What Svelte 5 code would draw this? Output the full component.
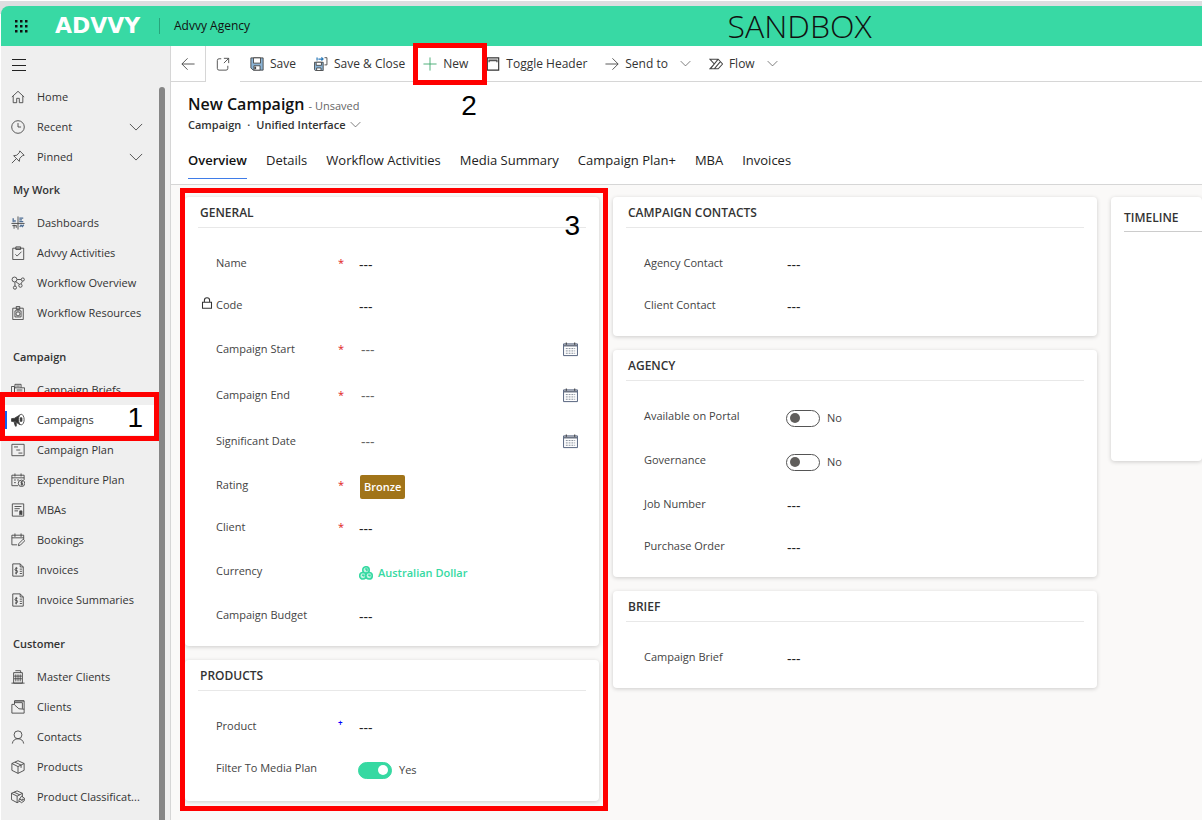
<script>
  const navGroups = [
    {
      title: '',
      items: [
        { label: 'Home', icon: 'home' },
        { label: 'Recent', icon: 'clock', expand: true },
        { label: 'Pinned', icon: 'pin', expand: true }
      ]
    },
    {
      title: 'My Work',
      items: [
        { label: 'Dashboards', icon: 'dashboard' },
        { label: 'Advvy Activities', icon: 'clipboard' },
        { label: 'Workflow Overview', icon: 'nodes' },
        { label: 'Workflow Resources', icon: 'badge' }
      ]
    },
    {
      title: 'Campaign',
      items: [
        { label: 'Campaign Briefs', icon: 'brief' },
        { label: 'Campaigns', icon: 'megaphone', current: true },
        { label: 'Campaign Plan', icon: 'plan' },
        { label: 'Expenditure Plan', icon: 'expenditure' },
        { label: 'MBAs', icon: 'mba' },
        { label: 'Bookings', icon: 'booking' },
        { label: 'Invoices', icon: 'invoice' },
        { label: 'Invoice Summaries', icon: 'invoice' }
      ]
    },
    {
      title: 'Customer',
      items: [
        { label: 'Master Clients', icon: 'building' },
        { label: 'Clients', icon: 'client' },
        { label: 'Contacts', icon: 'person' },
        { label: 'Products', icon: 'cube' },
        { label: 'Product Classificat...', icon: 'cubes' }
      ]
    }
  ];

  const commands = [
    { label: 'Save', icon: 'save' },
    { label: 'Save & Close', icon: 'saveclose' },
    { label: 'New', icon: 'plus', step: 2 },
    { label: 'Toggle Header', icon: 'header' },
    { label: 'Send to', icon: 'arrow', menu: true },
    { label: 'Flow', icon: 'flow', menu: true }
  ];

  const tabs = ['Overview', 'Details', 'Workflow Activities', 'Media Summary', 'Campaign Plan+', 'MBA', 'Invoices'];
  let activeTab = $state('Overview');

  const general = {
    title: 'GENERAL',
    fields: [
      { label: 'Name', kind: 'text', required: true },
      { label: 'Code', kind: 'text', locked: true },
      { label: 'Campaign Start', kind: 'date', required: true },
      { label: 'Campaign End', kind: 'date', required: true },
      { label: 'Significant Date', kind: 'date' },
      { label: 'Rating', kind: 'rating', required: true },
      { label: 'Client', kind: 'text', required: true },
      { label: 'Currency', kind: 'lookup' },
      { label: 'Campaign Budget', kind: 'text' }
    ]
  };
  const products = {
    title: 'PRODUCTS',
    fields: [
      { label: 'Product', kind: 'text', recommended: true },
      { label: 'Filter To Media Plan', kind: 'toggle', on: true }
    ]
  };
  const middle = [
    {
      title: 'CAMPAIGN CONTACTS',
      fields: [
        { label: 'Agency Contact', kind: 'text' },
        { label: 'Client Contact', kind: 'text' }
      ]
    },
    {
      title: 'AGENCY',
      fields: [
        { label: 'Available on Portal', kind: 'toggle', on: false },
        { label: 'Governance', kind: 'toggle', on: false },
        { label: 'Job Number', kind: 'text' },
        { label: 'Purchase Order', kind: 'text' }
      ]
    },
    { title: 'BRIEF', fields: [{ label: 'Campaign Brief', kind: 'text' }] }
  ];

  const idOf = (label) => label.toLowerCase().replace(/[^a-z]+/g, '-');
</script>

{#snippet icon(name)}
  <svg class="icon" viewBox="0 0 16 16" aria-hidden="true">
    {#if name === 'home'}
      <path d="M1 8 8 1.500 15 8M2.500 7v7.500h4V9.500h3v5h4V7" />
    {:else if name === 'clock'}
      <circle cx="8" cy="8" r="7.200" /><path d="M8 3.500V8h3.500" />
    {:else if name === 'pin'}
      <path d="m10 1 5 5-2 .500-3 3-.500 3.500L3 6.500 6.500 6l3-3zM6 10l-5 5" />
    {:else if name === 'dashboard'}
      <path stroke="#4d6d94" stroke-width="1.500" d="M2.500 7V2.500M4.500 7V4.500M9.500 2.500H14M9.500 4.500h3M9.500 6.500H14M10 12.500l1.500-2 1.500 1.500 1.500-2" />
      <path d="M.500 8.500h15M8 .500v15M1.500 11H6M3.500 10v4.500M6 10.500v3" />
    {:else if name === 'clipboard'}
      <path d="M2 2.500h12.500v13H2zM5.500 1h5.500v3H5.500zM5 9.500l2 2 5-5" />
    {:else if name === 'nodes'}
      <circle cx="4" cy="4" r="2.800" /><circle cx="13.500" cy="4" r="1.800" /><circle cx="4.500" cy="13.300" r="1.800" /><circle cx="10.800" cy="11" r="1.900" />
      <path d="M7 4h4.500M5.500 6.500 9.500 9.500M4.500 7v4.500M13 6l-1.500 3" />
    {:else if name === 'badge'}
      <path d="M2 2.500h12v13H2zM6 .500h4V4H6zM4.500 5.500h7v7h-7z" /><circle cx="8" cy="9" r="2.300" />
    {:else if name === 'brief'}
      <path d="M4.500 5.500v-4h7v4M.500 4h3.500v9H.500zM4 5.500h11.500v7.500H4zM6 3.500h4M6.500 8H13M6.500 10.500H13" />
    {:else if name === 'megaphone'}
      <path fill="#333" d="M.500 6.500 4 6l6.500-4v11.500L5 10l-4.500-.500zM3.500 10.500l2.500.500v4H5z" />
      <ellipse cx="11.800" cy="7.500" rx="3.200" ry="6" fill="#fff" /><path fill="#333" d="M10.500 5.500H12.500v4h-2z" />
    {:else if name === 'plan'}
      <path d="M1 1.500h14v13H1zM3.500 4.500H8M6 8h4.500M8.500 11.500H13" />
    {:else if name === 'expenditure'}
      <path d="M8 14.500H1V2.500h14V8M1 5.500h14M4.500.500v3.500M11.500.500v3.500M3.500 8h2M7 8h2M3.500 11h2" />
      <circle cx="12" cy="11.800" r="3.700" /><path d="M13.500 10h-2v1.800h1.800v1.700H11M12.300 9.300v5" />
    {:else if name === 'mba'}
      <path d="M1.500 1h13v14h-13zM4 4h8M4 6.500h6M4 9h4" /><path fill="#444" d="M10 9h2.500v4.500l-1.200-1-1.300 1z" />
    {:else if name === 'booking'}
      <path d="M7 13.500H1V2.500h13.500V7M1 5.500h13.500M4.500.500v4M11.500.500v4M8.500 14.500l.500-2.500 5-5 1.800 1.800-5 5z" />
    {:else if name === 'invoice'}
      <path d="M2 1h8.500L14 4.500V15H2zM10.500 1v3.500H14M10 7h2.500M10 9.500h2.500M10 12h2.500" />
      <path d="M7.500 6H5.500L4.500 7l.500 1.500h2L7.500 10l-1 1.500h-2M6 4.500V13" />
    {:else if name === 'building'}
      <path d="M3 3h10v12H3zM5 .800h6V3M.500 15h15M5.500 5v8M8 5v8M10.500 5v8M3.500 7h9M3.500 10h9" />
    {:else if name === 'client'}
      <path d="M1 15V5h3V1h11v14zM4 1h11M4 5.500 9 10l6 .500M4 3h9v7" />
    {:else if name === 'person'}
      <circle cx="8" cy="5.500" r="4.500" /><path d="M1.500 15.500c.500-3.500 3-5.500 6.500-5.500s6 2 6.500 5.500" />
    {:else if name === 'cube'}
      <path d="m8 .800 7 3.200v7.800l-7 3.500-7-3.500V4zM1 4l7 3.500L15 4M8 7.500v7.800M4.500 2.500l7 3.300V9" />
    {:else if name === 'cubes'}
      <path d="m7 1 6 2.800V11l-6 3.500L.500 11V3.800zM.500 3.800 7 7l6-3.200M7 7v7.500M3.500 2.500 10 5.500" />
      <path fill="#efefef" d="m12 7 3.500 2.500-.500 3-3 2-3.200-2.500zM9.500 10l3 2 2.500-2" />
    {:else if name === 'save'}
      <path fill="#8bb4d6" stroke="#444" d="M1 1h14v14H3.500L1 12.500z" />
      <path fill="#fff" stroke="#444" d="M4 1h8v6H4zM4.500 10h7v5h-7z" /><path stroke="#444" stroke-width="2" d="M6 11v3" />
    {:else if name === 'saveclose'}
      <path fill="#8bb4d6" stroke="#444" d="M.500 6h10v9.500h-9l-1-1z" /><path fill="#fff" stroke="#444" d="M2.500 6h6v3.500h-6zM3 12.500h5v3H3z" />
      <path stroke="#2878b8" stroke-width="1.400" d="M3.500 .500v3.500M5 2.300h5M8.500.500 10.300 2.300 8.500 4" /><path stroke="#444" d="M12 .800h2.800v8.200H12" />
    {:else if name === 'plus'}
      <path stroke="#3aa66a" d="M8 .500v15M.500 8h15" />
    {:else if name === 'header'}
      <path stroke="#333" stroke-width="1.300" d="M1.500 1h13v14h-13z" /><path stroke="#555" stroke-width="1.500" d="M3 3.500h10M3.500 6v-2h9v2" />
    {:else if name === 'arrow'}
      <path d="M.500 8h14.500M8.500 1.500 15 8l-6.500 6.500" />
    {:else if name === 'back'}
      <path d="M15.500 8H1M7.500 1.500 1 8l6.500 6.500" />
    {:else if name === 'popout'}
      <path d="M6 2H3.500Q1.500 2 1.500 4v9q0 2 2 2h8q2 0 2-2v-3M9 1.500h5.500V7M14.500 1.500 9 7" />
    {:else if name === 'flow'}
      <path stroke-width="1.200" d="M1 2.500h9.500L15.500 8l-5 5.500H1L6 8zM10.500 2.500l-9 11M13 5.200 6 13.500" />
    {:else if name === 'chevron'}
      <path d="m1 4.500 7 7 7-7" />
    {:else if name === 'lock'}
      <path stroke="#333" stroke-width="1.400" d="M2 7h12v8H2zM4.500 7V4.500Q4.500 1 8 1t3.500 3.500V7" />
    {:else if name === 'calendar'}
      <path fill="#fff" stroke="#4d5c78" d="M.600 2h14.800v12.500H.600z" /><path stroke="#6d7585" stroke-width="2" d="M1 3.800h14" />
      <path stroke="#333" d="M3.500.500V3M12.500.500V3" /><path stroke="#7f8794" stroke-dasharray="2 1" d="M3 7h10M3 9.500h10M3 12h10" />
    {:else if name === 'coins'}
      <g fill="#c2f3e2" stroke="#36d9a2" stroke-width="1.800"><circle cx="8" cy="4.500" r="3.700" /><circle cx="4.500" cy="11.200" r="3.700" /><circle cx="11.500" cy="11.200" r="3.700" /><path d="M7 3.500h2v2.500M3.500 10.500h2V12M10.500 10.500h2V12" /></g>
    {/if}
  </svg>
{/snippet}

{#snippet card(section)}
  <section class="card">
    <h2>{section.title}</h2>
    <div class="fields">
      {#each section.fields as f}
        <div class="field {f.kind}">
          {#if f.locked}<span class="lock">{@render icon('lock')}</span>{/if}
          <label for={idOf(f.label)}>{f.label}</label>
          <span class="mark" class:blue={f.recommended}>{f.required ? '*' : f.recommended ? '+' : ''}</span>
          <div class="value">
            {#if f.kind === 'text'}
              <input type="text" id={idOf(f.label)} placeholder="---" readonly={f.locked} />
            {:else if f.kind === 'date'}
              <input type="text" id={idOf(f.label)} placeholder="---" />
              <button class="pick" aria-label="Choose date">{@render icon('calendar')}</button>
            {:else if f.kind === 'rating'}
              <button class="pill" id={idOf(f.label)}>Bronze</button>
            {:else if f.kind === 'lookup'}
              <a class="link" id={idOf(f.label)} href="#currency">{@render icon('coins')}Australian Dollar</a>
            {:else}
              <input type="checkbox" role="switch" id={idOf(f.label)} bind:checked={f.on} />
              <span>{f.on ? 'Yes' : 'No'}</span>
            {/if}
          </div>
        </div>
      {/each}
    </div>
  </section>
{/snippet}

<div class="page">
  <div class="strip"></div>
  <header class="top">
    <button class="waffle" aria-label="App launcher">
      <svg viewBox="0 0 14 14" aria-hidden="true">
        {#each [1, 6, 11] as y}{#each [1, 6, 11] as x}<rect {x} {y} width="2.500" height="2.500" />{/each}{/each}
      </svg>
    </button>
    <span class="logo">ADVVY</span>
    <span class="app">Advvy Agency</span>
    <span class="env">SANDBOX</span>
  </header>

  <div class="body">
    <aside>
      <button class="burger" aria-label="Collapse menu"><span></span><span></span><span></span></button>
      <div class="navwrap">
        <nav>
          {#each navGroups as group}
            <div class="group">
              {#if group.title}<h3>{group.title}</h3>{/if}
              {#each group.items as item}
                <a href="#{idOf(item.label)}" class="item" class:current={item.current}>
                  {@render icon(item.icon)}
                  <span>{item.label}</span>
                  {#if item.expand}<i>{@render icon('chevron')}</i>{/if}
                  {#if item.current}<b class="callout one">1</b>{/if}
                </a>
              {/each}
            </div>
          {/each}
        </nav>
        <div class="scroll"></div>
      </div>
    </aside>

    <main>
      <div class="bar">
        <button class="square back" aria-label="Back">{@render icon('back')}</button>
        <button class="square" aria-label="Open in new window">{@render icon('popout')}</button>
        <div class="commands">
          {#each commands as c}
            <button class="cmd">
              {@render icon(c.icon)}<span>{c.label}</span>
              {#if c.menu}<i>{@render icon('chevron')}</i>{/if}
              {#if c.step}<b class="callout two"></b><b class="step">{c.step}</b>{/if}
            </button>
          {/each}
        </div>
      </div>

      <div class="record">
        <h1>New Campaign <small>- Unsaved</small></h1>
        <p>Campaign<span>·</span><button class="form">Unified Interface {@render icon('chevron')}</button></p>
        <div class="tabs" role="tablist">
          {#each tabs as t}
            <button role="tab" aria-selected={t === activeTab} onclick={() => (activeTab = t)}>{t}</button>
          {/each}
        </div>
      </div>

      <div class="columns">
        <div class="col">
          {@render card(general)}
          {@render card(products)}
          <b class="callout three">3</b>
        </div>
        <div class="col">
          {#each middle as s}{@render card(s)}{/each}
        </div>
        <section class="card timeline"><h2>TIMELINE</h2></section>
      </div>
    </main>
  </div>
</div>

<style>
  :global(body) { margin: 0; background: #fff; }
  .page {
    box-sizing: border-box; min-height: 100vh; padding: 0 0 6px 1px;
    display: flex; flex-direction: column; overflow: hidden;
    font: 12px/16px "Open Sans", "Noto Sans", sans-serif; color: #333;
  }
  button { font: inherit; color: inherit; background: none; border: 0; padding: 0; margin: 0; text-align: left; }
  a { color: inherit; text-decoration: none; }
  .icon { width: 14px; height: 14px; flex: none; fill: none; stroke: #444; stroke-width: 1; display: block; }

  .strip { height: 5px; margin: 1px 0 -8px -1px; padding-bottom: 8px; background: #dddee0; }
  .top {
    height: 40px; background: #38d9a4; border-radius: 8px 0 0 0; color: #111;
    display: flex; align-items: center; position: relative;
  }
  .waffle { width: 14px; margin-left: 13px; }
  .waffle svg { width: 14px; height: 14px; display: block; fill: #111; }
  .logo { width: 103px; margin-left: 27px; font: 700 22px/40px "DejaVu Sans", sans-serif; color: #fff; }
  .app { border-left: 1px solid #28a57c; padding-left: 14px; margin-left: 1px; }
  .env { position: absolute; left: 60.5%; font: 300 32px/40px "Open Sans", sans-serif; }

  .body { flex: 1; display: grid; grid-template-columns: 170px minmax(0, 1fr); }
  aside { background: #efefef; border-right: 1px solid #d6d6d6; display: flex; flex-direction: column; }
  .burger { margin: 13px 0 13px 11px; width: 14px; height: 12px; display: flex; flex-direction: column; justify-content: space-between; }
  .burger span { height: 1px; background: #222; }
  .navwrap { flex: 1; display: grid; grid-template-columns: 158px 6px; }
  .scroll { margin-top: 3px; background: #868686; border-radius: 3px 3px 0 0; }
  nav { margin-top: -2px; font-size: 11px; }
  h3 { margin: 0; padding: 10px 0 10px 12px; font-size: 11px; line-height: 16px; font-weight: 600; }
  .group + .group { padding-bottom: 11px; }
  .group + .group:last-child { padding-bottom: 0; }
  .item { display: flex; align-items: center; height: 30px; padding-left: 10px; gap: 12px; position: relative; white-space: nowrap; }
  .item i { position: absolute; right: 16px; }
  .current { background: #fff; }
  .current::before { content: ""; position: absolute; left: 3px; top: 6px; width: 3px; height: 18px; background: #1160f0; }
  .callout { position: absolute; z-index: 2; border: 5px solid #f00; color: #000; pointer-events: none; box-sizing: border-box; font: 28px/32px "Liberation Sans", Arial, sans-serif; }
  .one { inset: -13px 0 -6px -1px; text-align: right; padding: 5px 11px 0 0; }

  main { background: #faf9f8; min-width: 0; }
  .bar { display: flex; background: #fff; height: 36px; }
  .square { width: 34px; display: grid; place-items: center; box-sizing: border-box; }
  .back { width: 35px; border-right: 1px solid #d6d6d6; border-bottom: 1px solid #d6d6d6; }
  .commands { flex: 1; display: flex; gap: 18px; padding-left: 10px; border-bottom: 1px solid #d6d6d6; }
  .cmd { display: flex; align-items: center; gap: 6px; position: relative; white-space: nowrap; }
  .cmd i { margin-left: 6px; }
  .cmd i .icon, .form .icon { width: 11px; height: 11px; }
  .two { inset: -3px -19px -4px -10px; }
  .step { position: absolute; left: 38px; top: 44px; font: 28px/32px "Liberation Sans", Arial, sans-serif; color: #000; }

  .record { background: #fff; border-bottom: 1px solid #d6d6d6; padding: 12px 0 5px 17px; }
  h1 { margin: 0; font-size: 16px; line-height: 21px; font-weight: 600; color: #111; }
  small { font-size: 11px; font-weight: 400; color: #666; }
  p { margin: 0; display: flex; font-size: 11px; font-weight: 600; line-height: 17px; }
  p span { margin: 0 6px; }
  .form { display: flex; align-items: center; gap: 4px; font-weight: 600; }
  .tabs { display: flex; gap: 19px; margin-top: 18px; font-size: 13px; }
  .tabs button { height: 28px; padding-bottom: 10px; box-sizing: border-box; color: #222; white-space: nowrap; border-bottom: 1px solid transparent; }
  .tabs button[aria-selected="true"] { font-weight: 600; border-color: #3f7ce8; color: #111; }

  .columns { display: grid; grid-template-columns: 414fr 484fr 91fr; gap: 14px; padding: 12px 0 0 14px; align-items: start; }
  .col { display: grid; gap: 14px; position: relative; min-width: 0; }
  .card { background: #fff; border-radius: 4px; box-shadow: 0 1px 4px rgba(0, 0, 0, .18); min-width: 0; }
  h2 { margin: 0 13px; padding: 8px 2px 6px; font-size: 12px; line-height: 16px; font-weight: 600; border-bottom: 1px solid #e8e8e8; }
  .fields { padding: 14px 0 10px 31px; }
  .field { display: grid; grid-template-columns: 122px 21px minmax(0, 1fr); align-items: center; height: 42px; position: relative; color: #444; }
  label { font-size: 11px; }
  .date, .lookup { height: 46px; }
  .toggle { height: 44px; }
  .toggle label { padding-bottom: 2px; }
  .lock { position: absolute; left: -15px; top: 12px; }
  .lock .icon { width: 12px; height: 14px; }
  .mark { color: #e02020; font-size: 11px; line-height: 14px; }
  .blue { color: #00f; font-size: 8px; font-weight: 700; padding-bottom: 6px; }
  .value { display: flex; align-items: center; padding-top: 4px; font-size: 11px; }
  .toggle .value { padding-top: 2px; }
  .text .value { padding-top: 2px; }
  .value input[type="text"] { flex: 1; min-width: 0; border: 0; padding: 0; background: none; font: inherit; font-size: 14px; outline: 0; height: 20px; }
  .value input::placeholder { color: #222; opacity: 1; }
  .date .value { padding: 0 21px 0 2px; }
  .date .value input::placeholder { color: #666; }
  .pick .icon { width: 15px; height: 15px; }
  .pill { background: #a17419; color: #fff; font-weight: 600; font-size: 11px; border-radius: 2px; height: 24px; padding: 0 4px; margin-left: 1px; }
  .link { display: flex; align-items: center; gap: 5px; font-weight: 600; color: #36d9a2; }
  .toggle input {
    appearance: none; width: 34px; height: 17px; margin: 0 7px 0 -1px; box-sizing: border-box;
    border: 1px solid #555; border-radius: 9px; display: flex; align-items: center; padding: 0 3px;
  }
  .toggle input::before { content: ""; width: 10px; height: 10px; border-radius: 50%; background: #605e5c; }
  .toggle input:checked { background: #36d9a2; border-color: #36d9a2; justify-content: flex-end; }
  .toggle input:checked::before { background: #fff; }
  .timeline { min-height: 264px; }
  .timeline h2 { margin-right: 0; padding: 13px 0 5px; border-color: #ccc; }
  .three { inset: -9px -9px -10px -5px; text-align: right; padding: 17px 23px 0 0; }
</style>
